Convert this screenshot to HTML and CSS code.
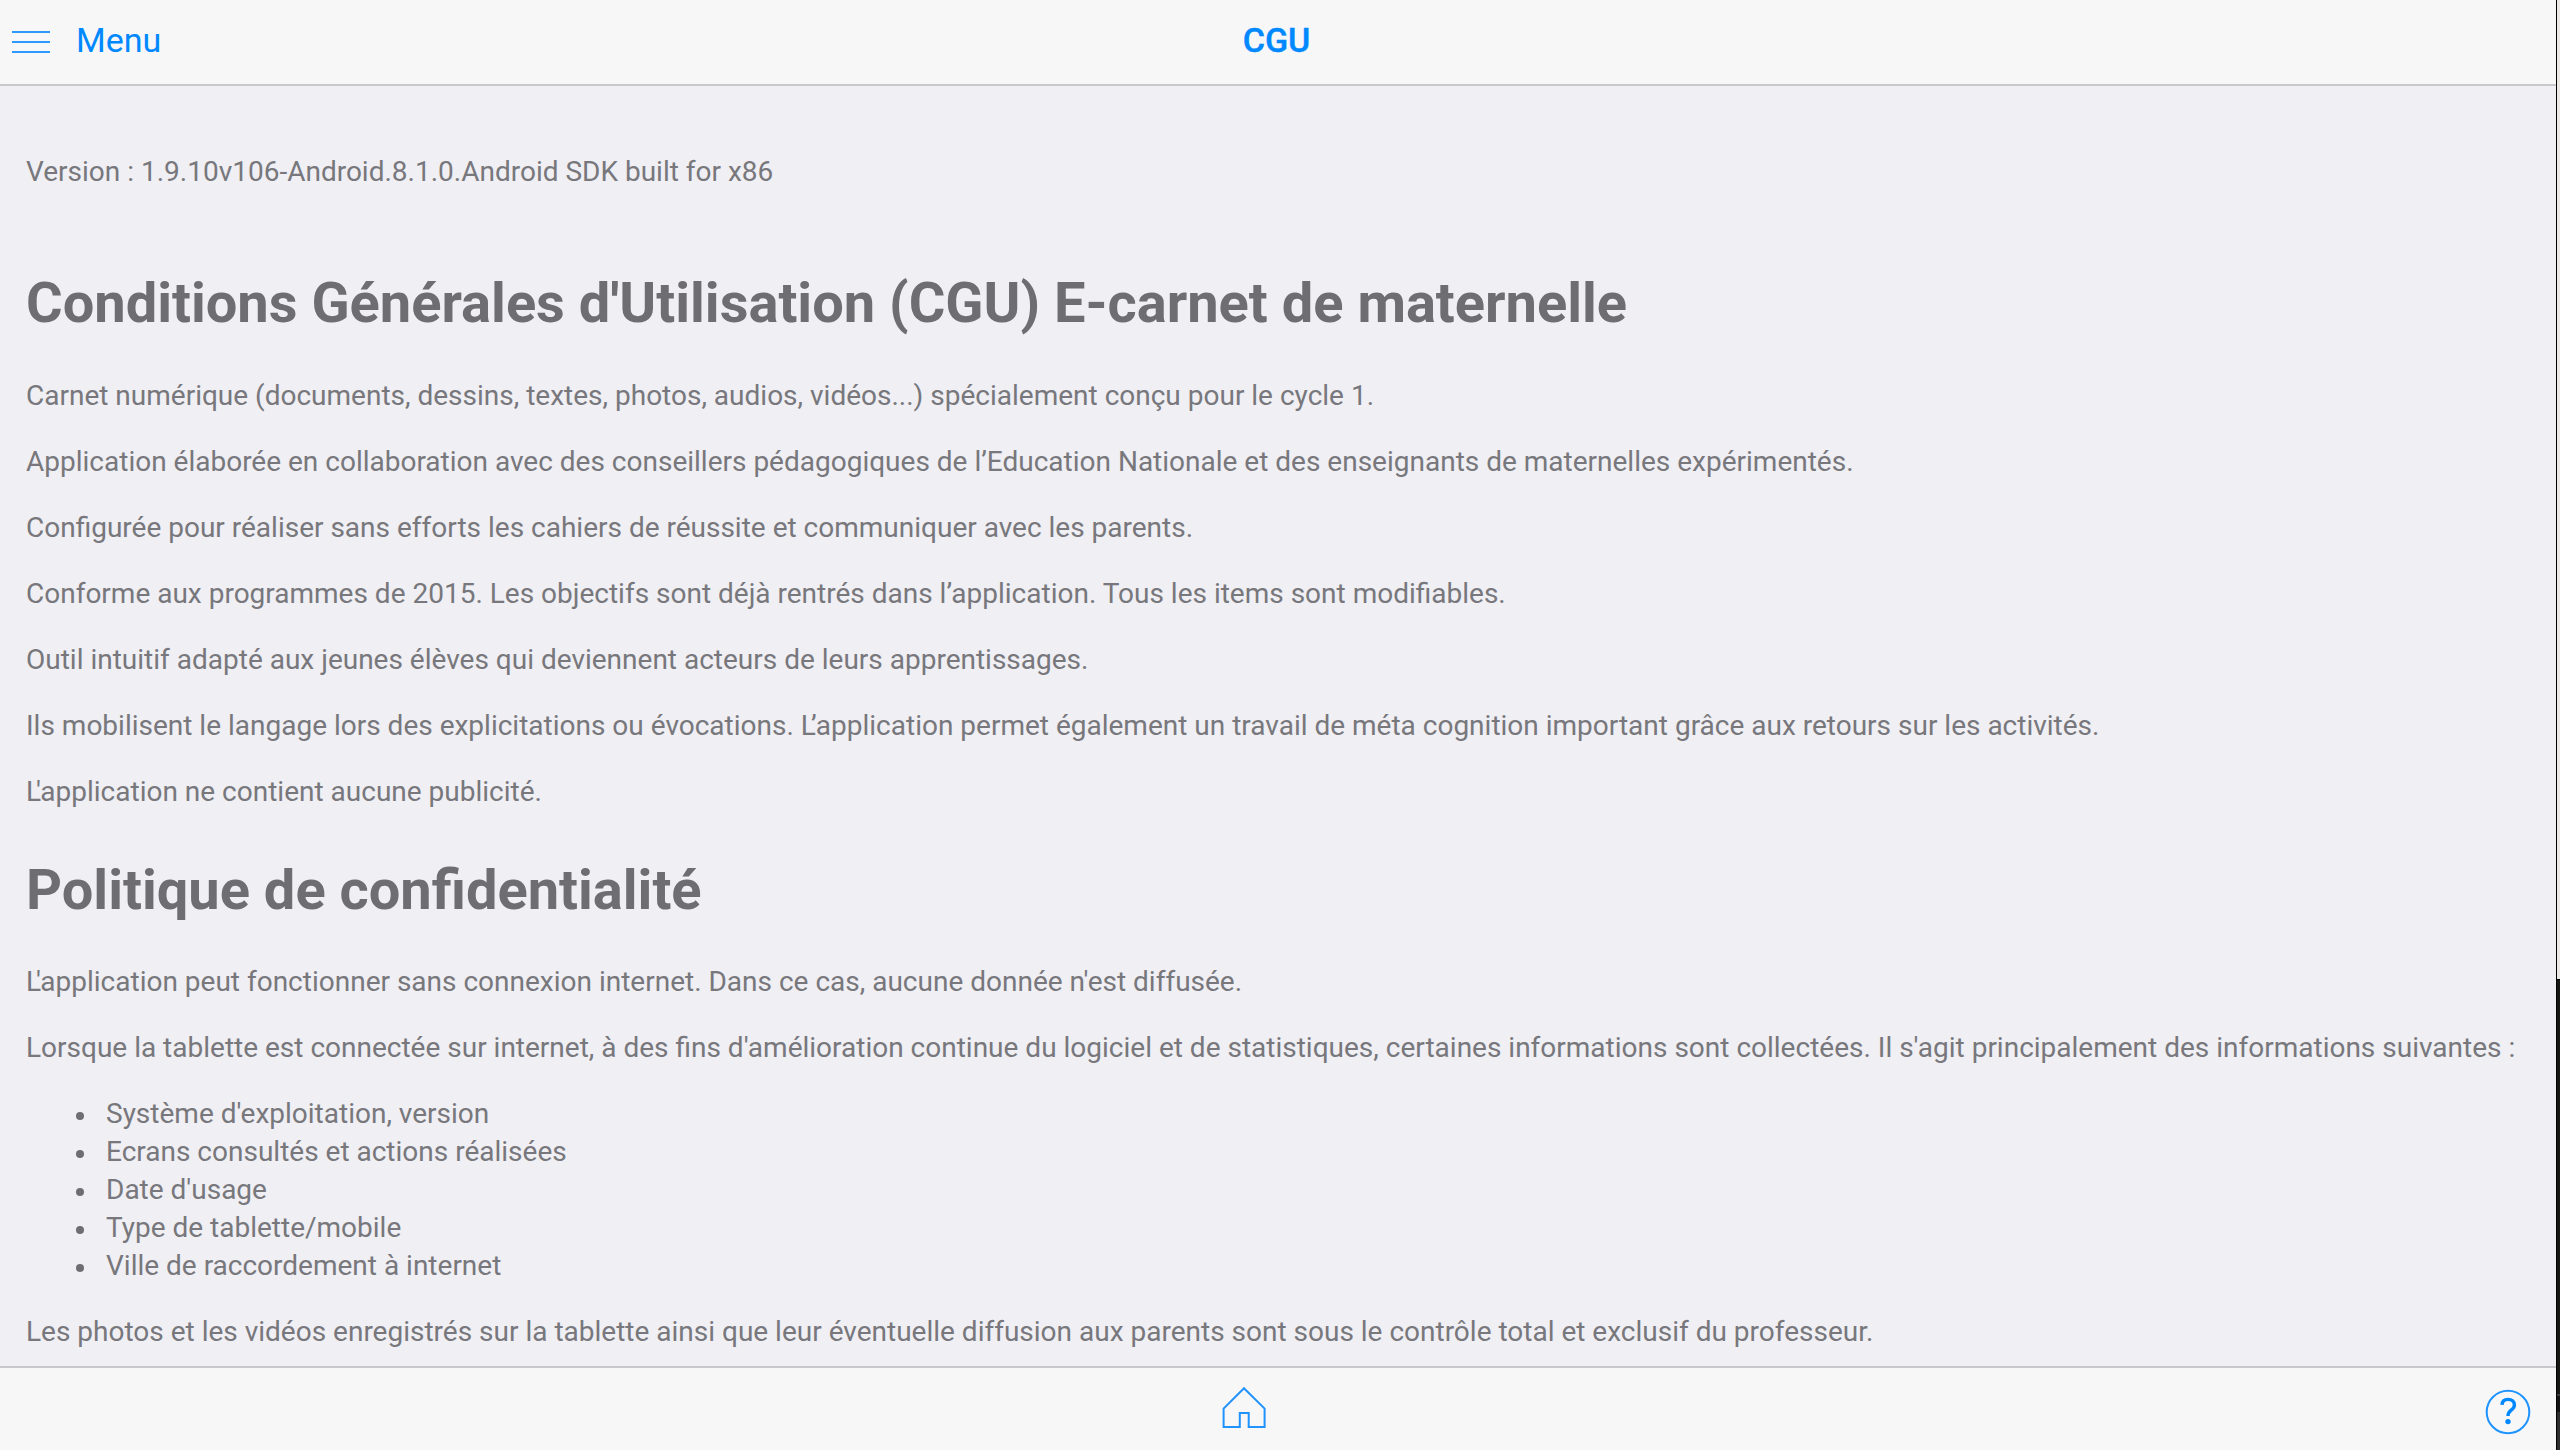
FILE: index.html
```
<!DOCTYPE html>
<html lang="fr">
<head>
<meta charset="utf-8">
<title>CGU</title>
<link rel="stylesheet" href="styles.css">
</head>
<body>
<div class="screen">
<div class="app">
<header class="navbar">
<a class="menu"><svg class="burger" width="38" height="24" viewBox="0 0 38 24"><path d="M0 2h38M0 12h38M0 22h38"/></svg><span>Menu</span></a>
<span class="title">CGU</span>
<span></span>
</header>
<main class="content">
<p class="version">Version : 1.9.10v106-Android.8.1.0.Android SDK built for x86</p>
<h1>Conditions Générales d'Utilisation (CGU) E-carnet de maternelle</h1>
<p>Carnet numérique (documents, dessins, textes, photos, audios, vidéos...) spécialement conçu pour le cycle 1.</p>
<p>Application élaborée en collaboration avec des conseillers pédagogiques de l’Education Nationale et des enseignants de maternelles expérimentés.</p>
<p>Configurée pour réaliser sans efforts les cahiers de réussite et communiquer avec les parents.</p>
<p>Conforme aux programmes de 2015. Les objectifs sont déjà rentrés dans l’application. Tous les items sont modifiables.</p>
<p>Outil intuitif adapté aux jeunes élèves qui deviennent acteurs de leurs apprentissages.</p>
<p>Ils mobilisent le langage lors des explicitations ou évocations. <span class="elision">L</span>’application permet également un travail de méta cognition important grâce aux retours sur les activités.</p>
<p><span class="elision">L</span>'application ne contient aucune publicité.</p>
<h1 class="privacy">Politique de confidentialité</h1>
<p><span class="elision">L</span>'application peut fonctionner sans connexion internet. Dans ce cas, aucune donnée n'est diffusée.</p>
<p>Lorsque la tablette est connectée sur internet, à des fins d'amélioration continue du logiciel et de statistiques, certaines informations sont collectées. Il s'agit principalement des informations suivantes :</p>
<ul>
<li>Système d'exploitation, version</li>
<li>Ecrans consultés et actions réalisées</li>
<li>Date d'usage</li>
<li>Type de tablette/mobile</li>
<li>Ville de raccordement à internet</li>
</ul>
<p>Les photos et les vidéos enregistrés sur la tablette ainsi que leur éventuelle diffusion aux parents sont sous le contrôle total et exclusif du professeur.</p>
</main>
<footer class="toolbar">
<span></span>
<svg class="icon home" width="44" height="44" viewBox="0 0 44 44"><path d="M22 2.2 42.6 22.6V41H26.7V27H17.8V41H1.6V22.6Z"/></svg>
<svg class="icon help" width="46" height="46" viewBox="0 0 46 46"><circle cx="23" cy="23" r="21.3"/><path class="hook" d="M17 15.8C17.2 12.2 19.5 10.4 23 10.4C26.8 10.4 29.4 12.6 29.4 15.9C29.4 18.2 28.2 19.6 26.2 21.1C23.9 22.9 23 24 23 27"/><circle class="dot" cx="23" cy="32.6" r="2.7"/></svg>
</footer>
</div>
<aside class="edge"><div class="edge-top"></div><div class="edge-mid"></div><div class="edge-low"></div><div class="edge-end"></div></aside>
</div>
</body>
</html>
```
FILE: styles.css
```
body {
  margin: 0;
  font-family: Roboto, sans-serif;
  font-size: 28px;
  line-height: 38px;
  color: #77777c;
  background: #efeff4;
}
.screen {
  display: flex;
  height: 1450px;
  overflow: hidden;
}
.app {
  display: flex;
  flex-direction: column;
  width: 2556px;
}
.navbar {
  flex: none;
  display: grid;
  grid-template-columns: 1fr auto 1fr;
  align-items: center;
  box-sizing: border-box;
  height: 86px;
  padding: 0 15px 4px 12px;
  background: #f7f7f8;
  border-bottom: 2px solid #c8c8ca;
  color: #0088ff;
  font-size: 34px;
}
.menu {
  display: flex;
  align-items: center;
  gap: 26px;
}
.burger {
  margin-top: 4px;
  stroke: #2e9aff;
  stroke-width: 2;
}
.title {
  font-weight: 500;
  -webkit-text-stroke: 0.4px #0088ff;
}
.content {
  flex: 1;
  min-height: 0;
  overflow: hidden;
  box-sizing: border-box;
  padding: 67px 26px 0;
}
p, ul {
  margin: 28px 0;
  white-space: nowrap;
}
.content .version {
  margin: 0 0 74px;
}
h1 {
  margin: 40px 0 36px;
  font-size: 56px;
  line-height: 76px;
  color: #6d6d72;
}
.privacy {
  margin: 41px 0 35px;
}
.elision {
  letter-spacing: -5px;
}
ul {
  padding-left: 50px;
  list-style: none;
}
li {
  display: flex;
}
li::before {
  content: "";
  width: 8px;
  height: 8px;
  margin: 17px 22px 0 0;
  border-radius: 50%;
  background: #6d6d72;
}
.toolbar {
  flex: none;
  display: grid;
  grid-template-columns: 1fr 44px 1fr;
  box-sizing: border-box;
  height: 84px;
  padding: 0 25px 0 0;
  background: #f7f7f8;
  border-top: 2px solid #c8c8ca;
}
.icon {
  fill: none;
  stroke: #1f93ff;
  stroke-width: 2;
}
.home {
  margin: 18px 0 0 -21.5px;
}
.help {
  margin-top: 21px;
  justify-self: end;
}
.hook {
  stroke: #0088ff;
  stroke-width: 3.4;
}
.dot {
  fill: #0088ff;
  stroke: none;
}
.edge {
  display: flex;
  flex-direction: column;
  width: 4px;
  box-sizing: border-box;
  border-left: 1px solid #000;
}
.edge-top {
  height: 979px;
  background: #ebe8e6;
  border-bottom: 1px solid #000;
}
.edge-mid {
  height: 414px;
  background: #161613;
  border-bottom: 2px solid #3a3a3a;
}
.edge-low {
  height: 16px;
  background: #131313;
}
.edge-end {
  flex: 1;
  background: #2e2e2e;
}
```
